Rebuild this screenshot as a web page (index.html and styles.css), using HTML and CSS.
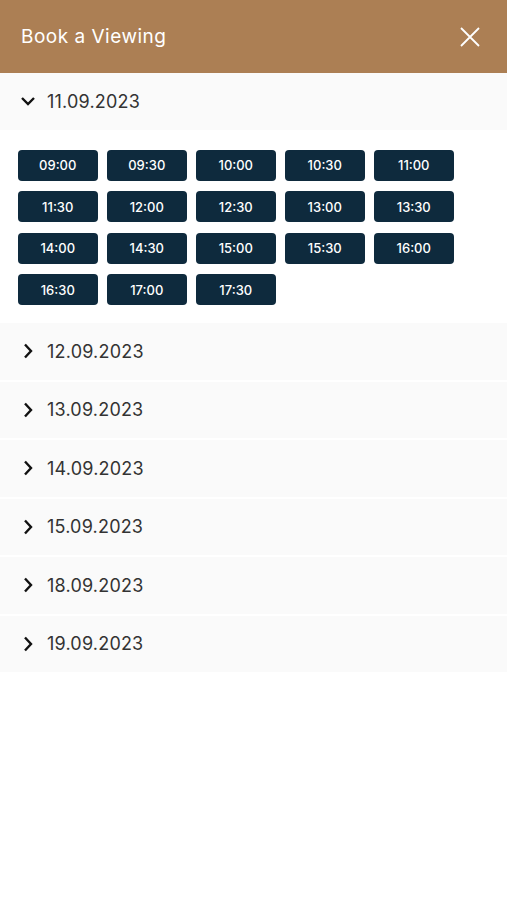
FILE: index.html
```html
<!DOCTYPE html>
<html lang="en">
<head>
    <meta charset="UTF-8">
    <meta name="viewport" content="width=device-width, initial-scale=1.0">
    <title>Book a Viewing</title>
    <link rel="stylesheet" href="styles.css">
</head>
<body>
    <div class="header">
        <h1>Book a Viewing</h1>
        <button class="close-btn" aria-label="Close">
            <svg width="20" height="20" viewBox="0 0 20 20"><path d="M1 1L19 19M19 1L1 19" stroke="#fff" stroke-width="1.8" fill="none"/></svg>
        </button>
    </div>

    <div class="day open">
        <div class="day-head">
            <svg class="chev" width="16" height="16" viewBox="0 0 16 16"><path d="M2 5L8 11L14 5" stroke="#111" stroke-width="2.4" fill="none"/></svg>
            <span>11.09.2023</span>
        </div>
        <div class="slots">
            <button class="slot">09:00</button>
            <button class="slot">09:30</button>
            <button class="slot">10:00</button>
            <button class="slot">10:30</button>
            <button class="slot">11:00</button>
            <button class="slot">11:30</button>
            <button class="slot">12:00</button>
            <button class="slot">12:30</button>
            <button class="slot">13:00</button>
            <button class="slot">13:30</button>
            <button class="slot">14:00</button>
            <button class="slot">14:30</button>
            <button class="slot">15:00</button>
            <button class="slot">15:30</button>
            <button class="slot">16:00</button>
            <button class="slot">16:30</button>
            <button class="slot">17:00</button>
            <button class="slot">17:30</button>
        </div>
    </div>

    <div class="day">
        <div class="day-head">
            <svg class="chev" width="16" height="16" viewBox="0 0 16 16"><path d="M5 1.5L11 8L5 14.5" stroke="#111" stroke-width="2.4" fill="none"/></svg>
            <span>12.09.2023</span>
        </div>
    </div>
    <div class="day">
        <div class="day-head">
            <svg class="chev" width="16" height="16" viewBox="0 0 16 16"><path d="M5 1.5L11 8L5 14.5" stroke="#111" stroke-width="2.4" fill="none"/></svg>
            <span>13.09.2023</span>
        </div>
    </div>
    <div class="day">
        <div class="day-head">
            <svg class="chev" width="16" height="16" viewBox="0 0 16 16"><path d="M5 1.5L11 8L5 14.5" stroke="#111" stroke-width="2.4" fill="none"/></svg>
            <span>14.09.2023</span>
        </div>
    </div>
    <div class="day">
        <div class="day-head">
            <svg class="chev" width="16" height="16" viewBox="0 0 16 16"><path d="M5 1.5L11 8L5 14.5" stroke="#111" stroke-width="2.4" fill="none"/></svg>
            <span>15.09.2023</span>
        </div>
    </div>
    <div class="day">
        <div class="day-head">
            <svg class="chev" width="16" height="16" viewBox="0 0 16 16"><path d="M5 1.5L11 8L5 14.5" stroke="#111" stroke-width="2.4" fill="none"/></svg>
            <span>18.09.2023</span>
        </div>
    </div>
    <div class="day">
        <div class="day-head">
            <svg class="chev" width="16" height="16" viewBox="0 0 16 16"><path d="M5 1.5L11 8L5 14.5" stroke="#111" stroke-width="2.4" fill="none"/></svg>
            <span>19.09.2023</span>
        </div>
    </div>
</body>
</html>
```

FILE: styles.css
```css
body {
    margin: 0;
    padding: 0;
    font-family: 'Inter', 'Noto Sans', sans-serif;
    background-color: #fff;
    color: #333;
}

.header {
    height: 73px;
    background-color: #ac7f54; /* 棕色标题栏 */
    display: flex;
    align-items: center;
    justify-content: space-between;
    padding: 0 27px 0 21px;
}

h1 {
    margin: 0;
    font-size: 19px;
    font-weight: 400;
    color: #fff;
    letter-spacing: 0.5px;
}

.close-btn {
    background: none;
    border: none;
    padding: 0;
    width: 20px;
    height: 20px;
    cursor: pointer;
}

.day {
    margin-bottom: 2px;
}

.day-head {
    height: 56.5px;
    background-color: #fafafa;
    display: flex;
    align-items: center;
    padding-left: 20px;
    font-size: 18px;
    color: #333;
    letter-spacing: 0.2px;
    cursor: pointer;
}

.chev {
    margin-right: 11px;
}

.slots {
    background-color: #fff;
    display: flex;
    flex-wrap: wrap;
    gap: 10.5px 9.5px;
    padding: 20px 40px 16px 18px;
}

.slot {
    width: 79.5px;
    height: 31px;
    background-color: #0e2a3d; /* 深蓝按钮 */
    color: #fff;
    border: none;
    border-radius: 4px;
    font-family: 'Inter', 'Noto Sans', sans-serif;
    font-size: 13px;
    font-weight: 500;
    padding: 0;
    cursor: pointer;
}
```
